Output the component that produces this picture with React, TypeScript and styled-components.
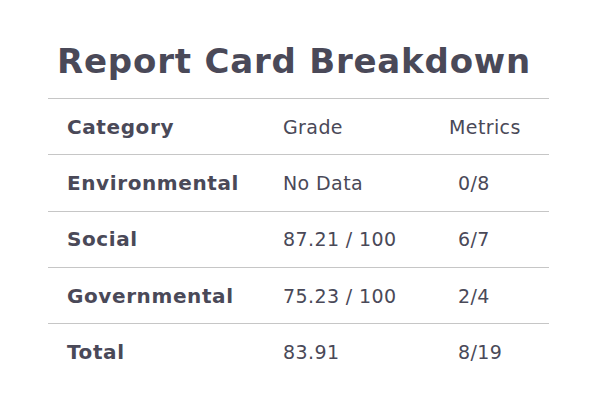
import React, {FC} from 'react';
import styled, {createGlobalStyle} from "styled-components";

const GlobalStyle = createGlobalStyle`
  body {
    margin: 0;
    background: #ffffff;
    font-family: "DejaVu Sans", "Open Sans", sans-serif;
    color: #4a4958;
  }
`;

const Card = styled.div`
  width: 598px;
  height: 417px;
  padding: 37px 0 0 48px;
  box-sizing: border-box;
`;

const Title = styled.h1`
  margin: 0 0 0 9px;
  font-size: 34px;
  line-height: 48px;
  font-weight: 700;
  letter-spacing: 0.8px;
  height: 61px;
`;

const Table = styled.div`
  width: 501px;
  border-top: 1px solid #c6c6c6;
`;

const Row = styled.div<{ $last?: boolean }>`
  display: grid;
  grid-template-columns: 216px 166px 1fr;
  align-items: center;
  height: 55.3px;
  padding-left: 19px;
  border-bottom: ${p => p.$last ? "none" : "1px solid #c6c6c6"};
  font-size: 19px;
`;

const Cell = styled.div<{ $bold?: boolean; $indent?: number }>`
  font-weight: ${p => p.$bold ? 700 : 400};
  font-size: ${p => p.$bold ? 20 : 19}px;
  letter-spacing: ${p => p.$bold ? 0.6 : 0.4}px;
  padding-left: ${p => p.$indent || 0}px;
  white-space: nowrap;
`;

interface IRow {
    category: string;
    grade: string;
    metrics: string;
}

const rows: IRow[] = [
    {category: "Environmental", grade: "No Data", metrics: "0/8"},
    {category: "Social", grade: "87.21 / 100", metrics: "6/7"},
    {category: "Governmental", grade: "75.23 / 100", metrics: "2/4"},
    {category: "Total", grade: "83.91", metrics: "8/19"},
];

const App: FC = () => {
    return (
        <>
            <GlobalStyle/>
            <Card>
                <Title>Report Card Breakdown</Title>
                <Table>
                    <Row>
                        <Cell $bold>Category</Cell>
                        <Cell>Grade</Cell>
                        <Cell>Metrics</Cell>
                    </Row>
                    {rows.map((r, i) => (
                        <Row key={r.category} $last={i === rows.length - 1}>
                            <Cell $bold>{r.category}</Cell>
                            <Cell>{r.grade}</Cell>
                            <Cell $indent={9}>{r.metrics}</Cell>
                        </Row>
                    ))}
                </Table>
            </Card>
        </>
    );
};

export default App;
